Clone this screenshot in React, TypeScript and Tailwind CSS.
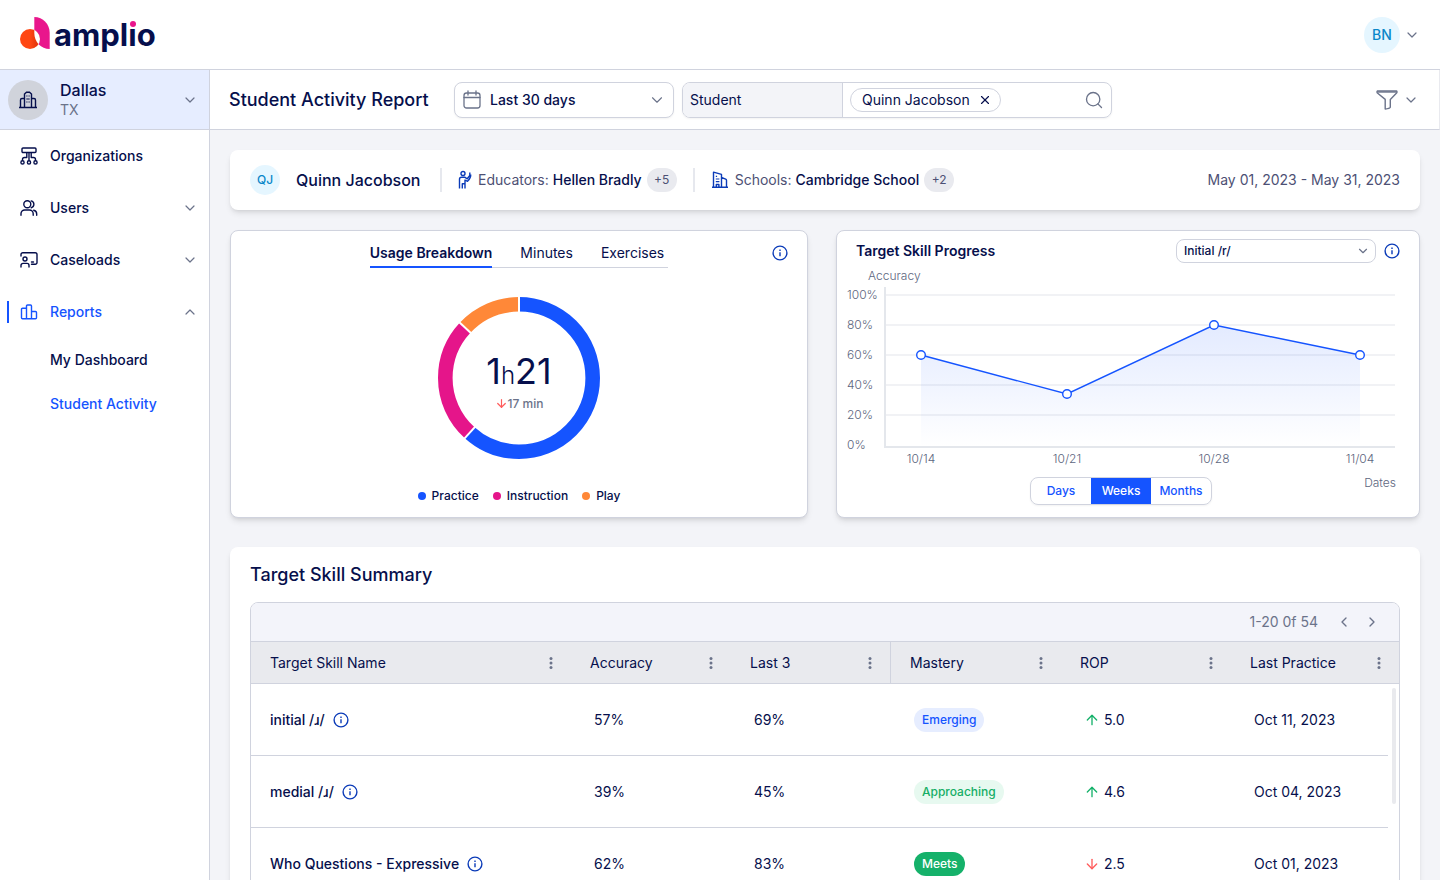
import { ReactNode, useState } from "react";
import { ArrowDown, ArrowUp, ChevronDown, ChevronLeft, ChevronRight, ChevronUp, Search, X } from "lucide-react";

type IconProps = { className?: string };

type Skill = {
  name: string;
  accuracy: string;
  lastThree: string;
  mastery: "Emerging" | "Approaching" | "Meets";
  rop: string;
  trend: "up" | "down";
  lastPractice: string;
};

const skills: Skill[] = [
  { name: "initial /ɹ/", accuracy: "57%", lastThree: "69%", mastery: "Emerging", rop: "5.0", trend: "up", lastPractice: "Oct 11, 2023" },
  { name: "medial /ɹ/", accuracy: "39%", lastThree: "45%", mastery: "Approaching", rop: "4.6", trend: "up", lastPractice: "Oct 04, 2023" },
  { name: "Who Questions - Expressive", accuracy: "62%", lastThree: "83%", mastery: "Meets", rop: "2.5", trend: "down", lastPractice: "Oct 01, 2023" },
];

const masteryStyles = {
  Emerging: "bg-[#e6edff] text-[#1554ff]",
  Approaching: "bg-[#e7f9f0] text-[#15ae66]",
  Meets: "bg-[#15b16a] text-white",
};

const columns = ["Target Skill Name", "Accuracy", "Last 3", "Mastery", "ROP", "Last Practice"];

const usage = [
  { label: "Practice", color: "#1554ff", dot: "bg-[#1554ff]", start: 0, size: 222 },
  { label: "Instruction", color: "#e5158a", dot: "bg-[#e5158a]", start: 222, size: 91 },
  { label: "Play", color: "#ff8838", dot: "bg-[#ff8838]", start: 313, size: 47 },
];

const progress = [
  { date: "10/14", x: 84, y: 90 },
  { date: "10/21", x: 230, y: 129 },
  { date: "10/28", x: 377, y: 60 },
  { date: "11/04", x: 523, y: 90 },
];

const Logo = () => (
  <a href="#" aria-label="amplio" className="flex items-center text-[#060f4c]">
    <svg width="32" height="36" viewBox="0 1 32 36">
      <defs>
        <linearGradient id="logoOrange" x1="0" x2="1">
          <stop offset="0.5" stopColor="#ff4713" />
          <stop offset="0.8" stopColor="#e8380c" />
        </linearGradient>
        <clipPath id="logoLeaf">
          <path d="M14.3 1C23 1 29.7 8 29.7 17v16C21 33 14.3 26 14.3 17z" />
        </clipPath>
      </defs>
      <path d="M14.3 1C23 1 29.7 8 29.7 17v16C21 33 14.3 26 14.3 17z" fill="#e9168c" />
      <circle cx="10" cy="23" r="10" fill="url(#logoOrange)" />
      <circle cx="10" cy="23" r="10" fill="#fff" clipPath="url(#logoLeaf)" />
    </svg>
    <span className="relative ml-0.5 text-[31px] leading-9 font-bold">
      amplio
      <span className="absolute top-1 right-5 h-[7px] w-[7px] bg-white" />
      <span className="absolute top-1 right-5 h-1.5 w-1.5 rounded-full bg-[#e9168c]" />
    </span>
  </a>
);

const BuildingIcon = ({ className }: IconProps) => (
  <svg className={className} width="20" height="20" viewBox="0 0 20 20" fill="none" stroke="currentColor" strokeWidth="1.4">
    <path d="M1 17.5h18M6.5 17.5V4l2-1.8h3l2 1.8v13.5M6.5 8.5H4a1.5 1.5 0 0 0-1.5 1.5v7.5M13.5 8.5H16a1.5 1.5 0 0 1 1.5 1.5v7.5" />
    <path d="M8.3 6h1.2M10.5 6h1.2M8.3 9h3.4M8.3 12h1.2M10.5 12h1.2" strokeWidth="1.2" />
  </svg>
);

const OrganizationsIcon = () => (
  <svg width="20" height="20" viewBox="0 0 20 20" fill="none" stroke="currentColor" strokeWidth="1.4" strokeLinejoin="round">
    <rect x="3" y="2" width="14" height="4.5" rx="1" />
    <path d="M10 6.5v8.3M3.5 14.8v-1.3q0-2 2-2h2.3V6.6M16.5 14.8v-1.3q0-2-2-2h-2.3V6.6" />
    <circle cx="3.5" cy="16.4" r="1.6" />
    <circle cx="10" cy="16.4" r="1.6" />
    <circle cx="16.5" cy="16.4" r="1.6" />
  </svg>
);

const UsersIcon = () => (
  <svg width="20" height="20" viewBox="0 0 20 20" fill="none" stroke="currentColor" strokeWidth="1.4" strokeLinecap="round">
    <circle cx="8.3" cy="6.3" r="3.5" />
    <path d="M2 17.3v-1.5a3.8 3.8 0 0 1 3.8-3.8h4.6a3.8 3.8 0 0 1 3.8 3.8v1.5M12.2 2.9a3.5 3.5 0 0 1 0 6.8M14.7 12.2a3.8 3.8 0 0 1 3 3.7v1.4" />
  </svg>
);

const CaseloadsIcon = () => (
  <svg width="20" height="20" viewBox="0 0 20 20" fill="none" stroke="currentColor" strokeWidth="1.4" strokeLinecap="round" strokeLinejoin="round">
    <path d="M2 6V4.6A1.8 1.8 0 0 1 3.8 2.8h12.4A1.8 1.8 0 0 1 18 4.6v7.8a1.8 1.8 0 0 1-1.8 1.8h-3.7M12.5 12h2" />
    <circle cx="6" cy="9" r="2" />
    <path d="M2 17v-1.6a2 2 0 0 1 2-2h4a2 2 0 0 1 2 2V17" />
  </svg>
);

const ReportsIcon = () => (
  <svg width="20" height="20" viewBox="0 0 20 20" fill="none" stroke="currentColor" strokeWidth="1.4" strokeLinejoin="round">
    <path d="M7.5 16.8V4q0-1 1-1h3q1 0 1 1v12.8M7.5 6.2h-4q-1 0-1 1v8.6q0 1 1 1h13q1 0 1-1v-5.3q0-1-1-1h-4" />
  </svg>
);

const CalendarIcon = ({ className }: IconProps) => (
  <svg className={className} width="18" height="20" viewBox="0 0 18 20" fill="none" stroke="currentColor" strokeWidth="1.3" strokeLinecap="round">
    <rect x="1" y="3" width="16" height="15" rx="2.5" />
    <path d="M1 7.5h16M5 1v4M13 1v4" />
  </svg>
);

const FilterIcon = () => (
  <svg width="22" height="20" viewBox="0 0 22 20" fill="none" stroke="currentColor" strokeWidth="1.4" strokeLinejoin="round">
    <path d="M1.4 1h19.2q.8 1.2 0 2l-6.3 6.4v7.8q-.6 1.3-5.1 1.8V9.4L1.4 3q-.8-1 0-2z" />
    <path d="M1.5 2h19" />
  </svg>
);

const EducatorIcon = () => (
  <svg width="14" height="20" viewBox="0 0 14 20" fill="none" stroke="currentColor" strokeWidth="1.4" strokeLinejoin="round">
    <circle cx="5" cy="3.5" r="2" />
    <path d="M1.5 18.5V9.2q0-2 2-2h3.2l2.5 1.6 2.6-3.3V2.5M12.7 4.5q.4 3-3.2 6.8L7 10v8.5M4.3 18.5v-4.8H7M1.5 13.5V11" />
  </svg>
);

const SchoolIcon = () => (
  <svg width="18" height="20" viewBox="0 0 18 20" fill="none" stroke="currentColor" strokeWidth="1.4" strokeLinejoin="round">
    <path d="M1 17.3h16M2.5 17.3V2.2l8 2.2v12.9M10.5 7.5l4.2 1.6q.8.4.8 1.2v7M5.3 17.3v-2.8h2.6v2.8" />
    <path d="M4.8 6.3h1.3M4.8 9h3.6M4.8 11.7h3.6" strokeWidth="1.2" />
  </svg>
);

const InfoIcon = () => (
  <svg width="16" height="16" viewBox="0 0 16 16" fill="none" stroke="#0b3bb8" strokeWidth="1.4">
    <circle cx="8" cy="8" r="6.9" />
    <path d="M8 7.3v4M8 4.6v1.4" />
  </svg>
);

const InfoButton = ({ label }: { label: string }) => (
  <button aria-label={label} className="shrink-0 cursor-pointer">
    <InfoIcon />
  </button>
);

const DotsIcon = () => (
  <svg width="4" height="14" viewBox="0 0 4 14" fill="#6b738a">
    <circle cx="2" cy="2.5" r="1.5" />
    <circle cx="2" cy="7" r="1.5" />
    <circle cx="2" cy="11.5" r="1.5" />
  </svg>
);

type NavItemProps = { icon: ReactNode; label: string; chevron?: "up" | "down"; active?: boolean };

const NavItem = ({ icon, label, chevron, active }: NavItemProps) => (
  <a href="#" className={`relative flex h-[52px] items-center pr-[11px] pl-[19px] font-medium ${active ? "text-[#1554ff]" : ""}`}>
    {active && <span className="absolute left-[7px] h-[22px] w-0.5 bg-[#1554ff]" />}
    {icon}
    <span className="ml-[11px] flex-1">{label}</span>
    {chevron === "down" && <ChevronDown size={16} strokeWidth={1.8} className="text-[#6b738a]" />}
    {chevron === "up" && <ChevronUp size={16} strokeWidth={1.8} className="text-[#6b738a]" />}
  </a>
);

const Sidebar = () => (
  <aside className="w-[210px] shrink-0 border-r border-[#d0d3de] bg-white">
    <button className="flex h-[60px] w-full cursor-pointer items-center border-b border-[#d0d3de] bg-[#e6edff] pr-[11px] pl-2 text-left">
      <span className="flex h-10 w-10 items-center justify-center rounded-full bg-[#d0d3db]">
        <BuildingIcon />
      </span>
      <span className="ml-3 flex-1">
        <span className="block text-base leading-5 font-medium">Dallas</span>
        <span className="block leading-5 text-[#6b738a]">TX</span>
      </span>
      <ChevronDown size={16} strokeWidth={1.8} className="text-[#6b738a]" />
    </button>
    <nav>
      <NavItem icon={<OrganizationsIcon />} label="Organizations" />
      <NavItem icon={<UsersIcon />} label="Users" chevron="down" />
      <NavItem icon={<CaseloadsIcon />} label="Caseloads" chevron="down" />
      <NavItem icon={<ReportsIcon />} label="Reports" chevron="up" active />
      <a href="#" className="flex h-11 items-center pl-[50px] font-medium">My Dashboard</a>
      <a href="#" className="flex h-11 items-center pl-[50px] font-medium text-[#1554ff]">Student Activity</a>
    </nav>
  </aside>
);

const Toolbar = () => {
  const [student, setStudent] = useState("Quinn Jacobson");

  return (
    <div className="flex h-[60px] shrink-0 items-center border-r border-b border-[#d0d3de] border-r-[#e9eaef] bg-white pr-5 pl-[19px]">
      <h1 className="min-w-52 text-lg font-medium">Student Activity Report</h1>
      <div className="relative ml-[17px] w-[220px]">
        <CalendarIcon className="pointer-events-none absolute top-2 left-[9px] text-[#6b738a]" />
        <select aria-label="Date range" className="h-9 w-full appearance-none rounded-lg border border-[#d0d3de] bg-white pl-[35px] font-medium shadow-xs">
          <option>Last 30 days</option>
        </select>
        <ChevronDown size={18} strokeWidth={1.5} className="pointer-events-none absolute top-[9px] right-2 text-[#6b738a]" />
      </div>
      <div className="ml-2 flex h-9 w-[430px] items-center overflow-hidden rounded-lg border border-[#d0d3de] shadow-xs">
        <select aria-label="Search by" className="h-full w-40 shrink-0 appearance-none border-r border-[#d0d3de] bg-[#f3f4f8] pl-[7px]">
          <option>Student</option>
        </select>
        {student && (
          <span className="ml-[7px] flex h-6 shrink-0 items-center rounded-full border border-[#d0d3de] pr-2 pl-[11px]">
            {student}
            <button aria-label="Remove student" className="ml-2 cursor-pointer" onClick={() => setStudent("")}>
              <X size={14} />
            </button>
          </span>
        )}
        <input aria-label="Student search" className="h-full min-w-0 flex-1 px-2 outline-none" />
        <Search size={20} strokeWidth={1.6} className="mr-[7px] shrink-0 text-[#6b738a]" />
      </div>
      <button aria-label="Filters" className="ml-auto flex cursor-pointer items-center gap-[5px] text-[#6b738a]">
        <FilterIcon />
        <ChevronDown size={16} strokeWidth={1.8} />
      </button>
    </div>
  );
};

const StudentBar = () => (
  <section className="flex h-[60px] items-center rounded-lg bg-white px-5 shadow-md">
    <span className="flex h-[30px] w-[30px] items-center justify-center rounded-full bg-[#e5f6ff] text-xs font-medium text-[#0a87c9]">QJ</span>
    <h2 className="ml-4 min-w-32 text-base font-medium">Quinn Jacobson</h2>
    <span className="mx-4 h-6 w-0.5 bg-[#e6e8ee]" />
    <span className="flex items-center text-[#0b3bb8]"><EducatorIcon /></span>
    <p className="ml-1.5"><span className="text-[#4d5074]">Educators:</span> <span className="font-medium">Hellen Bradly</span></p>
    <button className="ml-[5px] h-6 w-[30px] cursor-pointer rounded-full bg-[#e9eaef] text-xs text-[#4d5074]">+5</button>
    <span className="mx-4 h-6 w-0.5 bg-[#e6e8ee]" />
    <span className="flex items-center text-[#0b3bb8]"><SchoolIcon /></span>
    <p className="ml-1.5"><span className="text-[#4d5074]">Schools:</span> <span className="font-medium">Cambridge School</span></p>
    <button className="ml-[5px] h-6 w-[30px] cursor-pointer rounded-full bg-[#e9eaef] text-xs text-[#4d5074]">+2</button>
    <p className="ml-auto text-[#4d5074]">May 01, 2023 - May 31, 2023</p>
  </section>
);

const UsageCard = () => {
  const [tab, setTab] = useState("Usage Breakdown");

  return (
    <section className="relative flex h-72 flex-col items-center rounded-lg border border-[#d0d3de] bg-white shadow-md">
      <div role="tablist" className="mt-2 flex h-[29px] gap-7 border-b border-[#d0d3de] pr-1">
        {["Usage Breakdown", "Minutes", "Exercises"].map((name) => (
          <button
            key={name}
            role="tab"
            aria-selected={tab === name}
            onClick={() => setTab(name)}
            className={`h-[29px] cursor-pointer border-b-2 ${tab === name ? "border-[#1554ff] font-semibold" : "border-transparent"}`}
          >
            {name}
          </button>
        ))}
      </div>
      <div className="absolute top-3.5 right-[19px] flex">
        <InfoButton label="About usage" />
      </div>
      <div className="relative mt-7 flex h-[164px] w-[164px] flex-col items-center justify-center pt-1.5">
        <svg className="absolute inset-0" viewBox="-82 -82 164 164" fill="none">
          {usage.map((part) => (
            <circle
              key={part.label}
              r="73.7"
              stroke={part.color}
              strokeWidth="14.6"
              pathLength="360"
              strokeDasharray={`${part.size} ${360 - part.size}`}
              strokeDashoffset={-part.start}
              transform="rotate(-90)"
            />
          ))}
          {usage.map((part) => (
            <path key={part.label} d="M0 -64V-82" stroke="#fff" strokeWidth="2" transform={`rotate(${part.start})`} />
          ))}
        </svg>
        <p className="relative text-4xl leading-10">
          1<span className="text-2xl font-light">h</span>21
        </p>
        <p className="relative mt-1 flex items-center text-xs leading-4 font-medium text-[#6b738a]">
          <ArrowDown size={13} strokeWidth={2.2} className="text-[#ff5c5c]" />
          17 min
        </p>
      </div>
      <ul className="mt-7 flex gap-3.5 text-xs leading-4 font-medium">
        {usage.map((part) => (
          <li key={part.label} className="flex items-center gap-1.5">
            <span className={`h-2 w-2 rounded-full ${part.dot}`} />
            {part.label}
          </li>
        ))}
      </ul>
    </section>
  );
};

const ProgressChart = () => {
  const points = progress.map((point) => `${point.x},${point.y}`).join(" ");

  return (
    <svg viewBox="0 0 582 212" className="w-full text-xs font-light" fill="#5d667e">
      <defs>
        <linearGradient id="area" x1="0" x2="0" y1="0" y2="1">
          <stop offset="0" stopColor="#1554ff" stopOpacity="0.12" />
          <stop offset="1" stopColor="#1554ff" stopOpacity="0" />
        </linearGradient>
      </defs>
      <text x="31" y="15">Accuracy</text>
      {[100, 80, 60, 40, 20, 0].map((value, i) => (
        <g key={value}>
          <text x="10" y={34 + i * 30}>{value}%</text>
          {value > 0 && <path d={`M48 ${30 + i * 30}H558`} stroke="#f1f2f5" strokeWidth="2" />}
        </g>
      ))}
      <path d="M48 22V182H558" fill="none" stroke="#e4e7ec" strokeWidth="2" />
      <polygon points={`84,182 ${points} 523,182`} fill="url(#area)" />
      <polyline points={points} fill="none" stroke="#1554ff" strokeWidth="1.4" />
      {progress.map((point) => (
        <g key={point.date}>
          <circle cx={point.x} cy={point.y} r="4.3" fill="#fff" stroke="#1554ff" strokeWidth="1.4" />
          <text x={point.x} y="198" textAnchor="middle">{point.date}</text>
        </g>
      ))}
    </svg>
  );
};

const ProgressCard = () => {
  const [range, setRange] = useState("Weeks");

  return (
    <section className="h-72 rounded-lg border border-[#d0d3de] bg-white shadow-md">
      <div className="flex items-center pt-2 pr-[19px] pl-[19px]">
        <h2 className="flex-1 font-semibold">Target Skill Progress</h2>
        <div className="relative mr-2 w-[200px]">
          <select aria-label="Target skill" className="block h-6 w-full appearance-none rounded-lg border border-[#d0d3de] pl-[7px] text-xs font-medium">
            <option>Initial /r/</option>
          </select>
          <ChevronDown size={14} className="pointer-events-none absolute top-[5px] right-1.5 text-[#6b738a]" />
        </div>
        <InfoButton label="About skill progress" />
      </div>
      <div className="mt-0.5">
        <ProgressChart />
      </div>
      <div className="flex items-start justify-between pr-[23px] pl-[193px] text-xs">
        <div className="flex h-7 overflow-hidden rounded-lg border border-[#d0d3de] font-medium shadow-xs">
          {["Days", "Weeks", "Months"].map((name) => (
            <button
              key={name}
              onClick={() => setRange(name)}
              className={`w-[60px] cursor-pointer ${range === name ? "bg-[#1554ff] text-white" : "text-[#1554ff]"}`}
            >
              {name}
            </button>
          ))}
        </div>
        <span className="leading-3 font-light text-[#5d667e]">Dates</span>
      </div>
    </section>
  );
};

const SummaryCard = () => (
  <section className="rounded-lg bg-white px-5 pt-3.5 pb-5 shadow-md">
    <h2 className="text-lg leading-7 font-medium">Target Skill Summary</h2>
    <div className="mt-[13px] overflow-hidden rounded-t-lg border border-[#d0d3de]">
      <div className="flex h-[39px] items-center justify-end border-b border-[#d0d3de] bg-[#f3f4fa] pr-[19px] text-[#6b738a]">
        <span>1-20 0f 54</span>
        <button aria-label="Previous page" className="ml-[18px] cursor-pointer"><ChevronLeft size={16} /></button>
        <button aria-label="Next page" className="ml-3 cursor-pointer"><ChevronRight size={16} /></button>
      </div>
      <table className="w-full table-fixed border-separate border-spacing-0 text-left">
        <colgroup>
          <col />
          <col className="w-40" />
          <col className="w-40" />
          <col className="w-[170px]" />
          <col className="w-[170px]" />
          <col className="w-[157px]" />
          <col className="w-[11px]" />
        </colgroup>
        <thead>
          <tr className="h-[42px] bg-[#e9eaee]">
            {columns.map((name, i) => (
              <th
                key={name}
                scope="col"
                colSpan={i === 5 ? 2 : 1}
                className={`border-b border-[#d0d3de] p-0 font-normal ${i === 2 ? "border-r" : ""}`}
              >
                <div className="flex items-center justify-between pr-[18px] pl-[19px]">
                  {name}
                  <button aria-label={`${name} options`} className="cursor-pointer"><DotsIcon /></button>
                </div>
              </th>
            ))}
          </tr>
        </thead>
        <tbody>
          {skills.map((skill, i) => (
            <tr key={skill.name} className="h-[72px] *:border-[#d0d3de]">
              <td className="border-b p-0 pl-[19px] font-medium">
                <div className="flex items-center gap-2">
                  {skill.name}
                  <InfoButton label={`About ${skill.name}`} />
                </div>
              </td>
              <td className="border-b p-0 pl-[23px]">{skill.accuracy}</td>
              <td className="border-b p-0 pl-[23px]">{skill.lastThree}</td>
              <td className="border-b p-0 pl-[23px]">
                <span className={`inline-flex h-6 items-center rounded-full px-2 text-xs font-medium ${masteryStyles[skill.mastery]}`}>{skill.mastery}</span>
              </td>
              <td className="border-b p-0 pl-[23px]">
                <div className="flex items-center gap-1">
                  {skill.trend === "up" ? <ArrowUp size={16} className="text-[#15b16a]" /> : <ArrowDown size={16} className="text-[#ff5c5c]" />}
                  {skill.rop}
                </div>
              </td>
              <td className="border-b p-0 pl-[23px]">{skill.lastPractice}</td>
              {i === 0 && (
                <td rowSpan={skills.length} className="p-0 pt-1 pl-1 align-top">
                  <div className="h-[116px] w-1 rounded-full bg-[#e9eaee]" />
                </td>
              )}
            </tr>
          ))}
        </tbody>
      </table>
    </div>
  </section>
);

const App = () => {
  return (
    <div className="flex h-screen flex-col overflow-hidden bg-[#f3f4f8] font-[Inter,sans-serif] text-sm text-[#060f4c]">
      <header className="flex h-[70px] shrink-0 items-center justify-between border-b border-[#d0d3de] bg-white pr-5 pl-5">
        <Logo />
        <button aria-label="Account" className="flex cursor-pointer items-center gap-1">
          <span className="flex h-9 w-9 items-center justify-center rounded-full bg-[#e5f6ff] font-medium text-[#0a87c9]">BN</span>
          <ChevronDown size={16} strokeWidth={1.8} className="text-[#6b738a]" />
        </button>
      </header>
      <div className="flex min-h-0 flex-1">
        <Sidebar />
        <div className="flex min-w-0 flex-1 flex-col">
          <Toolbar />
          <main className="flex-1 overflow-y-auto p-5 [scrollbar-width:none]">
            <StudentBar />
            <div className="mt-5 mb-[29px] grid grid-cols-[578fr_584fr] gap-7">
              <UsageCard />
              <ProgressCard />
            </div>
            <SummaryCard />
          </main>
        </div>
      </div>
    </div>
  );
};

export default App;
